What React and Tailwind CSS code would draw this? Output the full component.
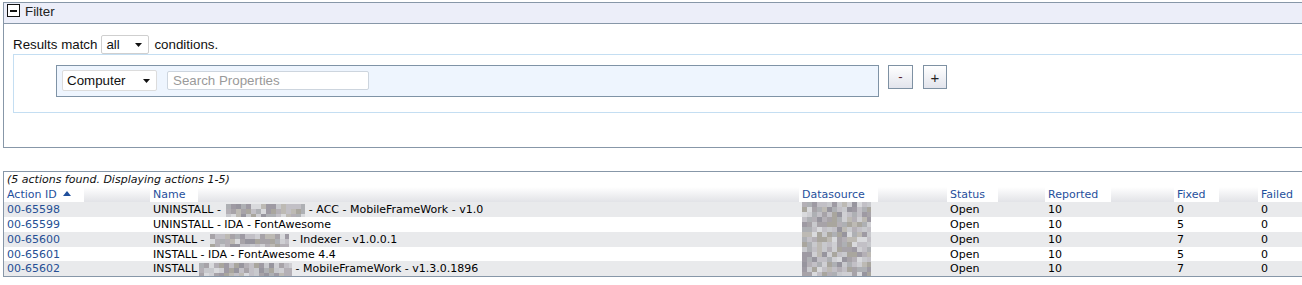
import React from 'react';

// pixelated (blurred-out) patches from the screenshot
const palette = ['#a7a3a8', '#b4b0b6', '#c2c0c6', '#cfcfd3', '#9e9aa3', '#aeb0b4', '#d9dadd', '#a9a69e', '#bdbab4', '#c8c9cd', '#97959e'];

function Mosaic({ w, h, cell = 5, seed = 1 }) {
  let s = seed;
  const rnd = () => {
    s = (s * 9301 + 49297) % 233280;
    return s / 233280;
  };
  const rects = [];
  for (let y = 0; y < h; y += cell) {
    for (let x = 0; x < w; x += cell) {
      const c = palette[Math.floor(rnd() * palette.length)];
      rects.push(<rect key={x + '-' + y} x={x} y={y} width={cell} height={cell} fill={c} />);
    }
  }
  return (
    <svg width={w} height={h} className="inline-block align-middle" shapeRendering="crispEdges">
      {rects}
    </svg>
  );
}

function FakeSelect({ label, className }) {
  return (
    <div className={'flex items-center justify-between bg-white border border-[#cfcfcf] rounded-[2px] pl-[4px] pr-[6px] ' + className}>
      <span>{label}</span>
      <svg width="7" height="4" viewBox="0 0 7 4"><path d="M0 0h7L3.5 4z" fill="#111" /></svg>
    </div>
  );
}

const rows = [
  { id: '00-65598', name: ['UNINSTALL - ', 79, ' - ACC - MobileFrameWork - v1.0'], fixed: '0' },
  { id: '00-65599', name: ['UNINSTALL - IDA - FontAwesome'], fixed: '5' },
  { id: '00-65600', name: ['INSTALL - ', 79, ' - Indexer - v1.0.0.1'], fixed: '7' },
  { id: '00-65601', name: ['INSTALL - IDA - FontAwesome 4.4'], fixed: '5' },
  { id: '00-65602', name: ['INSTALL', 93, ' - MobileFrameWork - v1.3.0.1896'], fixed: '7' },
];

const rowHeights = ['h-[15px]', 'h-[15px]', 'h-[15px]', 'h-[14px]', 'h-[15px]'];
const cols = 'grid grid-cols-[146px_649px_148px_98px_129px_84px_1fr]';

function HeadCell({ children }) {
  return (
    <div className="h-full">
      <span className="inline-flex items-center h-full bg-white pl-[3px] pr-[13px] text-[#1f4f9c]">{children}</span>
    </div>
  );
}

export default function App() {
  return (
    <div className="w-[1302px] h-[285px] bg-white overflow-hidden pt-[2px] pl-[3px]">
      {/* Filter */}
      <section className="h-[146px] border-l border-t border-b border-[#8797a8] font-['Liberation_Sans',Arial,sans-serif] text-[13.33px] text-[#111]">
        <div className="h-[21px] bg-[#eceef9] border-b border-[#8797a8] flex items-start pt-[1px] pl-[3px]">
          <div className="w-[13px] h-[13px] border border-[#111] bg-white flex items-center justify-center">
            <div className="w-[7px] h-[2px] bg-[#111]" />
          </div>
          <span className="ml-[5px] leading-[15px] text-[#222]">Filter</span>
        </div>
        <div className="pl-[9px] pt-[11px]">
          <div className="flex items-center h-[19px]">
            <span>Results match</span>
            <FakeSelect label="all" className="ml-[4px] w-[48px] h-[19px]" />
            <span className="ml-[5px]">conditions.</span>
          </div>
          <div className="border-l border-t border-b border-[#c4def2] pl-[42px] pt-[10px] pb-[15px] flex items-start">
            <div className="w-[823px] h-[32px] border border-[#7f93a6] bg-[#eef5fe] flex items-start pl-[5px] pt-[4px]">
              <FakeSelect label="Computer" className="w-[95px] h-[21px] border-[#dcdcdc]" />
              <div className="ml-[10px] mt-[1px] w-[202px] h-[19px] bg-white border border-[#cdd5de] rounded-[2px] pl-[5px] flex items-center text-[#9a9a9a]">
                Search Properties
              </div>
            </div>
            <button className="ml-[9px] w-[25px] h-[24px] border border-[#7e91a3] bg-linear-to-b from-white to-[#e2e4ec] flex items-center justify-center text-[#5a2030] leading-none">
              -
            </button>
            <button className="ml-[10px] w-[24px] h-[24px] border border-[#7e91a3] bg-linear-to-b from-white to-[#e2e4ec] flex items-center justify-center text-[#222] leading-none text-[15px] font-light">
              +
            </button>
          </div>
        </div>
      </section>

      {/* Results */}
      <section className="mt-[23px] border-l border-t border-b border-[#8797a8] font-['DejaVu_Sans',Verdana,sans-serif] text-[11px] text-black">
        <div className="h-[15px] leading-[15px] pl-[3px] italic text-[#111]">(5 actions found. Displaying actions 1-5)</div>
        <div className={cols + ' h-[15px] leading-[15px] bg-linear-to-b from-white to-[#e2e3e7]'}>
          <HeadCell>
            Action ID
            <svg width="8" height="5" viewBox="0 0 8 5" className="ml-[6px] mb-[2px]"><path d="M0 5h8L4 0z" fill="#1f4f9c" /></svg>
          </HeadCell>
          <HeadCell>Name</HeadCell>
          <HeadCell>Datasource</HeadCell>
          <HeadCell>Status</HeadCell>
          <HeadCell>Reported</HeadCell>
          <HeadCell>Fixed</HeadCell>
          <HeadCell>Failed</HeadCell>
        </div>
        <div className="relative">
          {rows.map((r, i) => (
            <div key={r.id} className={cols + ' ' + rowHeights[i] + ' items-center ' + (i % 2 === 0 ? 'bg-[#e9eaec]' : 'bg-white')}>
              <div className="pl-[3px] text-[#264f94]">{r.id}</div>
              <div className="pl-[3px] whitespace-nowrap flex items-center">
                {r.name.map((part, j) =>
                  typeof part === 'number' ? (
                    <span key={j} className="ml-[2px] inline-flex">
                      <Mosaic w={part} h={13} cell={5} seed={i * 31 + j + 7} />
                    </span>
                  ) : (
                    <span key={j} className="whitespace-pre">{part}</span>
                  )
                )}
              </div>
              <div className="pl-[3px]" />
              <div className="pl-[3px]">Open</div>
              <div className="pl-[3px]">10</div>
              <div className="pl-[3px]">{r.fixed}</div>
              <div className="pl-[3px]">0</div>
            </div>
          ))}
          {/* blurred datasource column, laid over the rows */}
          <div className="absolute left-[798px] top-0">
            <Mosaic w={69} h={74} cell={5} seed={123} />
          </div>
        </div>
      </section>
    </div>
  );
}
